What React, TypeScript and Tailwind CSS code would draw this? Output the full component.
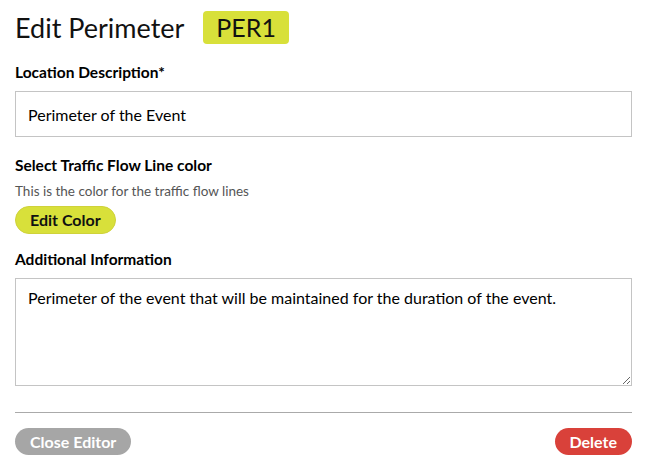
import { useState } from 'react'

const font = { fontFamily: '"Lato", "Liberation Sans", sans-serif' }

export default function App() {
  const [description, setDescription] = useState('Perimeter of the Event')
  const [info, setInfo] = useState(
    'Perimeter of the event that will be maintained for the duration of the event.'
  )

  return (
    <div className="min-h-[476px] bg-white pl-[15px] pr-[14px] pt-[11px] text-black" style={font}>
      <div className="flex items-center h-[33px]">
        <h1 className="text-[27px] leading-none text-[#111]">Edit Perimeter</h1>
        <span className="ml-[19px] flex h-[33px] items-center rounded-[4px] bg-[#d8e03a] px-[13px] text-[25px] leading-none text-[#111]">
          PER1
        </span>
      </div>

      <label className="mt-[19px] block text-[15.5px] font-bold leading-[18px]">
        Location Description*
      </label>
      <input
        value={description}
        onChange={(e) => setDescription(e.target.value)}
        className="mt-[10px] block h-[46px] w-full border border-[#c4c4c4] px-[12px] text-[16px] outline-none"
        style={font}
      />

      <h2 className="mt-[19px] text-[15.5px] font-bold leading-[18px]">Select Traffic Flow Line color</h2>
      <p className="mt-[8px] text-[13.5px] leading-[18px] text-[#555]">
        This is the color for the traffic flow lines
      </p>
      <button
        className="mt-[6px] flex h-[28px] items-center rounded-full border border-[#cfd23a] bg-[#d8e03a] px-[14px] text-[16px] font-bold text-[#111]"
        style={font}
      >
        Edit Color
      </button>

      <label className="mt-[16px] block text-[15.5px] font-bold leading-[18px]">
        Additional Information
      </label>
      <textarea
        value={info}
        onChange={(e) => setInfo(e.target.value)}
        className="mt-[10px] block h-[108px] w-full border border-[#c4c4c4] px-[12px] py-[7px] text-[16px] outline-none"
        style={font}
      />

      <hr className="mt-[26px] border-t border-[#aaa]" />

      <div className="mt-[15px] flex items-center justify-between">
        <button
          className="flex h-[27px] items-center rounded-full bg-[#a6a6a6] px-[15px] text-[16px] font-bold text-white"
          style={font}
        >
          Close Editor
        </button>
        <button
          className="flex h-[27px] items-center rounded-full bg-[#d9413a] px-[15px] text-[16px] font-bold text-white"
          style={font}
        >
          Delete
        </button>
      </div>
    </div>
  )
}
